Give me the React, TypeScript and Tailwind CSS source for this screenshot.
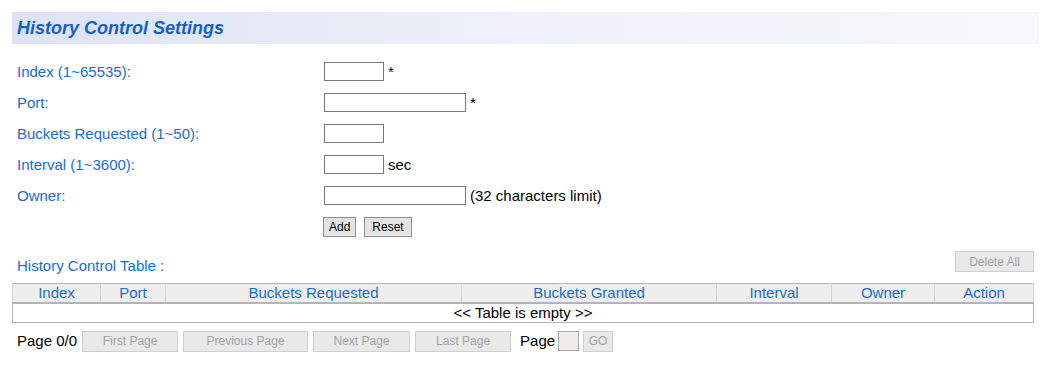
import React from 'react';

const fields = [
  { label: 'Index (1~65535):', width: 'w-[60px]', suffix: '*' },
  { label: 'Port:', width: 'w-[142px]', suffix: '*' },
  { label: 'Buckets Requested (1~50):', width: 'w-[60px]', suffix: '' },
  { label: 'Interval (1~3600):', width: 'w-[60px]', suffix: 'sec' },
  { label: 'Owner:', width: 'w-[142px]', suffix: '(32 characters limit)' },
];

const columns = [
  { name: 'Index', width: 'w-[88px]' },
  { name: 'Port', width: 'w-[65px]' },
  { name: 'Buckets Requested', width: 'w-[296px]' },
  { name: 'Buckets Granted', width: 'w-[255px]' },
  { name: 'Interval', width: 'w-[115px]' },
  { name: 'Owner', width: 'w-[103px]' },
  { name: 'Action', width: '' },
];

const pageButtons = [
  { label: 'First Page', width: 'w-[96px]' },
  { label: 'Previous Page', width: 'w-[125px]' },
  { label: 'Next Page', width: 'w-[97px]' },
  { label: 'Last Page', width: 'w-[96px]' },
];

const DisabledButton = ({ label, width }: { label: string; width: string }) => (
  <button
    disabled
    className={`${width} h-[21px] bg-[#e9e9e9] border border-[#cfcfcf] text-[12px] text-[#a3a3a3] leading-none`}
  >
    {label}
  </button>
);

export default function App() {
  return (
    <div className="w-[1042px] h-[376px] bg-white font-['Liberation_Sans',Arial,sans-serif] text-[15px] pt-[12px] pl-[12px]">
      {/* Header */}
      <div className="w-[1027px] h-[32px] flex items-center pl-[5px] bg-gradient-to-r from-[#dde3f4] via-[#eef1f9] to-[#f8f8fc]">
        <h1 className="text-[18px] font-bold italic text-[#1560c8]">History Control Settings</h1>
      </div>

      {/* Form */}
      <div className="mt-[12px]">
        {fields.map((f) => (
          <div key={f.label} className="flex items-center h-[31px]">
            <div className="w-[312px] pl-[5px] text-[#1a6dd2] mt-[1px]">{f.label}</div>
            <input
              type="text"
              className={`${f.width} h-[19px] border border-[#777777] bg-white`}
            />
            {f.suffix && <span className="ml-[4px] text-black mt-[1px]">{f.suffix}</span>}
          </div>
        ))}
        <div className="flex items-center h-[31px] pl-[311px] gap-[8px]">
          <button className="h-[20px] px-[5px] bg-[#e4e4e4] border border-[#8f8f8f] text-[12px] text-black leading-none">
            Add
          </button>
          <button className="h-[20px] px-[7px] bg-[#e4e4e4] border border-[#8f8f8f] text-[12px] text-black leading-none">
            Reset
          </button>
        </div>
      </div>

      {/* Table title */}
      <div className="w-[1022px] flex items-end justify-between mt-[9px]">
        <span className="pl-[5px] text-[#1a6dd2] leading-none mb-[-1px]">History Control Table :</span>
        <DisabledButton label="Delete All" width="w-[79px]" />
      </div>

      {/* Table */}
      <table className="mt-[11px] w-[1022px] border-collapse border border-[#b4b4b4] table-fixed">
        <thead>
          <tr className="bg-[#eeeeee]">
            {columns.map((c) => (
              <th
                key={c.name}
                className={`${c.width} h-[19px] font-normal text-[#1a6dd2] border-x border-[#d4d4d4] border-b-2 border-b-[#b4b4b4] p-0 leading-[16px]`}
              >
                {c.name}
              </th>
            ))}
          </tr>
        </thead>
        <tbody>
          <tr>
            <td colSpan={7} className="h-[19px] text-center text-black p-0 leading-[18px]">
              &lt;&lt; Table is empty &gt;&gt;
            </td>
          </tr>
        </tbody>
      </table>

      {/* Pagination */}
      <div className="flex items-center mt-[8px] h-[21px]">
        <span className="pl-[5px] text-black mr-[5px]">Page 0/0</span>
        <div className="flex gap-[5px]">
          {pageButtons.map((b) => (
            <DisabledButton key={b.label} label={b.label} width={b.width} />
          ))}
        </div>
        <span className="ml-[9px] text-black">Page</span>
        <input type="text" className="ml-[3px] w-[21px] h-[20px] bg-[#eeeee6] border border-[#a8a8a8]" />
        <button disabled className="ml-[4px] w-[30px] h-[21px] bg-[#e9e9e9] border border-[#cfcfcf] text-[12px] text-[#a3a3a3] leading-none">
          GO
        </button>
      </div>
    </div>
  );
}
